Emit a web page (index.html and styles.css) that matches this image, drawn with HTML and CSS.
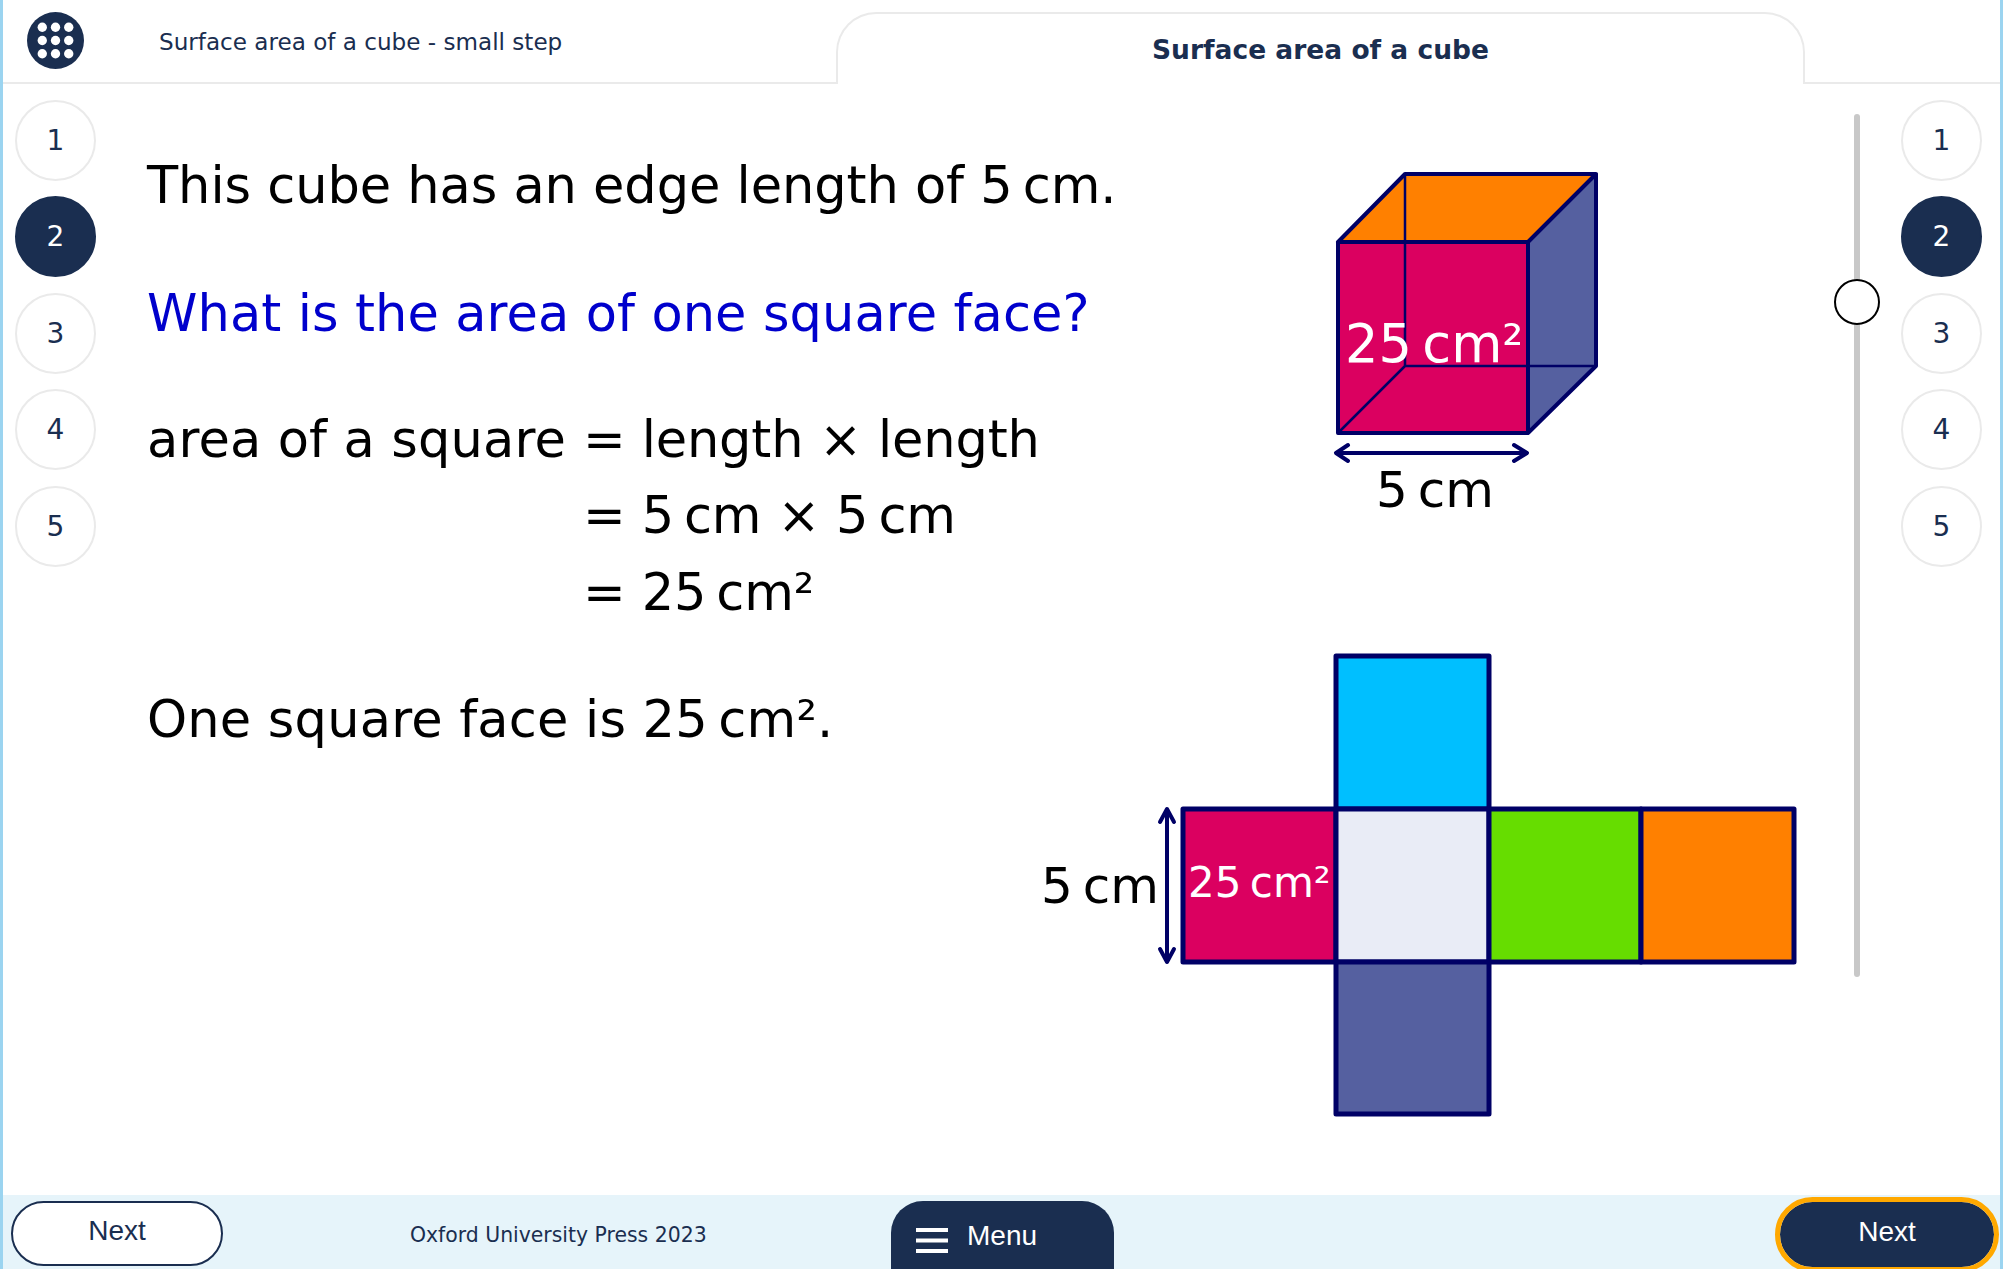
FILE: index.html
```html
<!DOCTYPE html>
<html lang="en">
<head>
  <meta charset="UTF-8" />
  <meta name="viewport" content="width=device-width, initial-scale=1.0" />
  <title>Surface area of a cube</title>
  <link rel="stylesheet" href="styles.css">
</head>
<body>
  <header class="top-bar">
    <svg class="logo" viewBox="0 0 56 56" width="57" height="57">
      <circle cx="28" cy="28" r="28" fill="#1a2e50" />
      <g fill="#fff">
        <circle cx="15" cy="15" r="4.6" /><circle cx="28" cy="15" r="4.6" /><circle cx="41" cy="15" r="4.6" />
        <circle cx="15" cy="28" r="4.6" /><circle cx="28" cy="28" r="4.6" /><circle cx="41" cy="28" r="4.6" />
        <circle cx="15" cy="41" r="4.6" /><circle cx="28" cy="41" r="4.6" /><circle cx="41" cy="41" r="4.6" />
      </g>
    </svg>
    <div class="lesson-title">Surface area of a cube - small step</div>
    <div class="tab">Surface area of a cube</div>
  </header>

  <main class="middle">
    <nav class="steps">
      <div class="step">1</div>
      <div class="step active">2</div>
      <div class="step">3</div>
      <div class="step">4</div>
      <div class="step">5</div>
    </nav>

    <section class="content">
      <p class="line first">This cube has an edge length of 5&#8201;cm.</p>
      <p class="line question">What is the area of one square face?</p>
      <div class="working">
        <span class="wide">area of a square</span><span>= length × length</span>
        <span></span><span>= 5&#8201;cm × 5&#8201;cm</span>
        <span></span><span>= 25&#8201;cm²</span>
      </div>
      <p class="line answer">One square face is 25&#8201;cm².</p>
    </section>

    <svg class="figures" viewBox="1030 84 790 1111" width="790" height="1111">
      <!-- cube -->
      <polygon points="1338,242 1405,174 1596,174 1528,242" fill="#ff8000" />
      <polygon points="1528,242 1596,174 1596,366 1528,433" fill="#5560a0" />
      <rect x="1338" y="242" width="190" height="191" fill="#db0060" />
      <g stroke="#000066" fill="none" stroke-linejoin="round" stroke-linecap="round">
        <path d="M1405 174V366H1596M1405 366L1338 433" stroke-width="2.500" />
        <path d="M1338 242H1528V433H1338ZM1338 242L1405 174H1596V366L1528 433M1528 242L1596 174" stroke-width="4" />
        <path d="M1336 453H1526M1348 445L1336 453L1348 461M1514 445L1527 453L1514 461" stroke-width="4" />
      </g>
      <text class="fig-text big white" x="1345" y="362">25&#8201;cm²</text>
      <text class="fig-text" x="1376" y="507">5&#8201;cm</text>

      <!-- net -->
      <g stroke="#000066" stroke-width="5" stroke-linejoin="round">
        <rect x="1336" y="656" width="153" height="153" fill="#00bfff" />
        <rect x="1183" y="809" width="153" height="153" fill="#db0060" />
        <rect x="1336" y="809" width="153" height="153" fill="#e9ecf6" />
        <rect x="1489" y="809" width="152" height="153" fill="#66dd00" />
        <rect x="1641" y="809" width="153" height="153" fill="#ff8000" />
        <rect x="1336" y="962" width="153" height="152" fill="#5560a0" />
      </g>
      <path d="M1167 810V960M1160 822L1167 809L1174 822M1160 949L1167 962L1174 949" stroke="#000066" stroke-width="4" stroke-linecap="round" stroke-linejoin="round" fill="none" />
      <text class="fig-text" x="1041" y="903">5&#8201;cm</text>
      <text class="fig-text small white" x="1188" y="897">25&#8201;cm²</text>
    </svg>

    <div class="slider"><div class="thumb"></div></div>

    <nav class="steps right">
      <div class="step">1</div>
      <div class="step active">2</div>
      <div class="step">3</div>
      <div class="step">4</div>
      <div class="step">5</div>
    </nav>
  </main>

  <footer class="bottom-bar">
    <button class="btn">Next</button>
    <div class="copyright">Oxford University Press 2023</div>
    <button class="menu-btn">
      <svg viewBox="0 0 32 25" width="32" height="25"><path d="M0 2H32M0 12.500H32M0 23H32" stroke="#fff" stroke-width="4" /></svg>
      Menu
    </button>
    <button class="btn primary">Next</button>
  </footer>
</body>
</html>
```
FILE: styles.css
```css
* {
  box-sizing: border-box;
}

body {
  font-family: "DejaVu Sans", sans-serif;
  background: #fff;
  margin: 0;
  height: 1269px;
  overflow: hidden;
  display: flex;
  flex-direction: column;
  border-left: 3px solid #9bd4f0;
  border-right: 3px solid #9bd4f0;
  color: #000;
}

.top-bar {
  height: 84px;
  flex: none;
  display: flex;
  border-bottom: 2px solid #eaeaea;
}

.logo {
  margin: 12px 0 0 24px;
}

.lesson-title {
  margin: 29px 0 0 75px;
  width: 677px;
  font-size: 23.100px;
  color: #1a2e50;
}

.tab {
  width: 969px;
  height: 72px;
  margin-top: 12px;
  padding-top: 20px;
  text-align: center;
  font-size: 26.500px;
  font-weight: bold;
  color: #1a2e50;
  background: #fff;
  border: 2px solid #eaeaea;
  border-bottom: none;
  border-radius: 40px 40px 0 0;
}

.middle {
  flex: 1;
  display: flex;
  min-height: 0;
}

.steps {
  width: 108px;
  flex: none;
  padding: 15.500px 0 0 12px;
  display: flex;
  flex-direction: column;
  gap: 15.500px;
}

.steps.right {
  width: auto;
  padding-left: 0;
  margin-left: 41px;
}

.step {
  width: 81px;
  height: 81px;
  border: 2px solid #eaeaea;
  border-radius: 50%;
  display: flex;
  align-items: center;
  justify-content: center;
  font-size: 28px;
  color: #1a2e50;
}

.step.active {
  background: #1a2e50;
  border-color: #1a2e50;
  color: #fff;
}

.content {
  width: 36px;
  flex: none;
  padding-left: 36px;
  white-space: nowrap;
  font-size: 51px;
}

.line {
  margin: 0;
  height: 76px;
  line-height: 76px;
}

.first {
  margin-top: 64px;
  letter-spacing: -0.050px;
}

.question {
  margin-top: 52px;
  color: #0000cc;
  letter-spacing: 0.100px;
}

.working {
  display: grid;
  grid-template-columns: 436px auto;
  grid-template-rows: 76px 77px 75px;
  line-height: 76px;
  margin-top: 50px;
  letter-spacing: -0.150px;
}

.working .wide {
  letter-spacing: 0.150px;
}

.answer {
  margin-top: 52px;
  letter-spacing: 0.200px;
}

.figures {
  flex: none;
  margin-left: 883px;
}

.fig-text {
  font-family: "DejaVu Sans", sans-serif;
  font-size: 50px;
  fill: #000;
}

.fig-text.big {
  font-size: 52.500px;
}

.fig-text.small {
  font-size: 42px;
}

.fig-text.white {
  fill: #fff;
}

.slider {
  position: relative;
  width: 6px;
  height: 863px;
  margin: 30px 0 0 34px;
  flex: none;
  background: #c8c8c8;
  border-radius: 3px;
}

.thumb {
  position: absolute;
  left: -20px;
  top: 165px;
  width: 46px;
  height: 46px;
  background: #fff;
  border: 2px solid #000;
  border-radius: 50%;
}

.bottom-bar {
  height: 74px;
  flex: none;
  display: flex;
  background: #e6f4fa;
  padding-top: 6px;
}

.btn {
  width: 212px;
  height: 65px;
  margin-left: 8px;
  font-family: "Liberation Sans", Arial, sans-serif;
  font-size: 28px;
  color: #1a2e50;
  background: #fff;
  border: 2px solid #1a2e50;
  border-radius: 33px;
  padding: 0 0 5px;
}

.btn.primary {
  width: 214px;
  margin: 1px 6px 0 auto;
  color: #fff;
  background: #1a2e50;
  outline: 5px solid #ffa800;
}

.copyright {
  width: 481px;
  margin: 22px 0 0 187px;
  font-size: 20.400px;
  color: #1a2e50;
}

.menu-btn {
  width: 223px;
  height: 68px;
  display: flex;
  align-items: center;
  gap: 19px;
  padding: 1px 0 0 25px;
  font-family: "Liberation Sans", Arial, sans-serif;
  font-size: 28px;
  color: #fff;
  background: #1a2e50;
  border: none;
  border-radius: 32px 32px 0 0;
}

.menu-btn svg {
  margin-top: 9px;
}
```
